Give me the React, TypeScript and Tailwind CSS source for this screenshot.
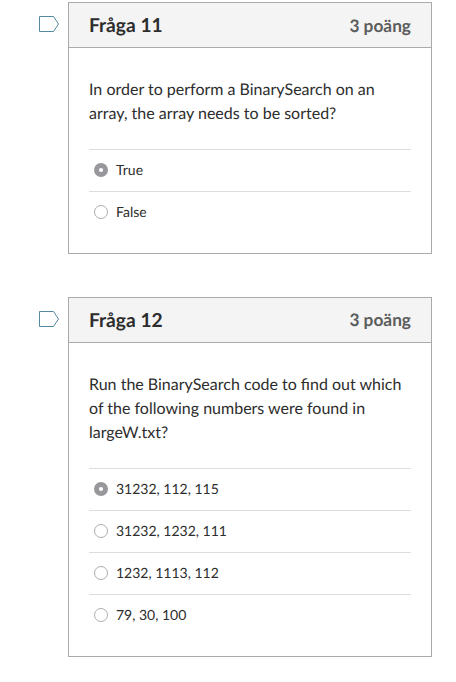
import React from "react";

type Question = { title: string; pointsPad: string; lines: string[]; answers: string[]; selected: number };

const questions: Question[] = [
  {
    title: "Fråga 11",
    pointsPad: "pt-px",
    lines: ["In order to perform a BinarySearch on an", "array, the array needs to be sorted?"],
    answers: ["True", "False"],
    selected: 0,
  },
  {
    title: "Fråga 12",
    pointsPad: "pb-px",
    lines: ["Run the BinarySearch code to find out which", "of the following numbers were found in", "largeW.txt?"],
    answers: ["31232, 112, 115", "31232, 1232, 111", "1232, 1113, 112", "79, 30, 100"],
    selected: 0,
  },
];

function Flag() {
  return (
    <svg className="mt-[13px] ml-[38px] block h-[18px] w-[22px] shrink-0" viewBox="0 0 22 18" fill="none">
      <path d="M1.5 1.5H15.5L20.5 9L15.5 16.5H1.5Z" stroke="#5588a3" strokeWidth="1" />
    </svg>
  );
}

function Radio({ checked }: { checked: boolean }) {
  return (
    <svg className="block h-4 w-4" viewBox="0 0 16 16">
      {checked ? (
        <>
          <circle cx="8" cy="8" r="7" fill="#98989c" />
          <circle cx="8" cy="8" r="2.1" fill="#fff" />
        </>
      ) : (
        <circle cx="8" cy="8" r="6.5" fill="#fff" stroke="#adadad" />
      )}
    </svg>
  );
}

function QuestionCard({ q }: { q: Question }) {
  return (
    <div className="flex items-start">
      <Flag />
      <section className="ml-2 w-[364px] border border-[#aaaaaa]">
        <header className="flex h-[45px] items-center justify-between border-b border-[#aaaaaa] bg-[#f4f4f4] px-5 font-bold">
          <h2 className="pt-0.5 text-[19.2px]">{q.title}</h2>
          <span className={`text-[17.3px] text-[#5c5c5c] ${q.pointsPad}`}>3 poäng</span>
        </header>
        <div className="px-5 pt-[30px] pb-5">
          <div className="text-base leading-6">
            {q.lines.map((l) => (
              <p key={l} className="whitespace-nowrap">{l}</p>
            ))}
          </div>
          <div className="mt-[23px]">
            {q.answers.map((a, i) => (
              <label key={a} className="flex h-[42px] items-center gap-[7px] border-t border-[#dddddd] pb-0.5 pl-1 text-sm">
                <Radio checked={i === q.selected} />
                <span>{a}</span>
              </label>
            ))}
          </div>
        </div>
      </section>
    </div>
  );
}

export default function App() {
  return (
    <main className="flex h-[682px] w-[456px] flex-col gap-[43px] overflow-hidden bg-white pt-[2px] font-[Lato,sans-serif] text-[#2d2d2d] antialiased [text-rendering:geometricPrecision]">
      {questions.map((q) => (
        <QuestionCard key={q.title} q={q} />
      ))}
    </main>
  );
}
